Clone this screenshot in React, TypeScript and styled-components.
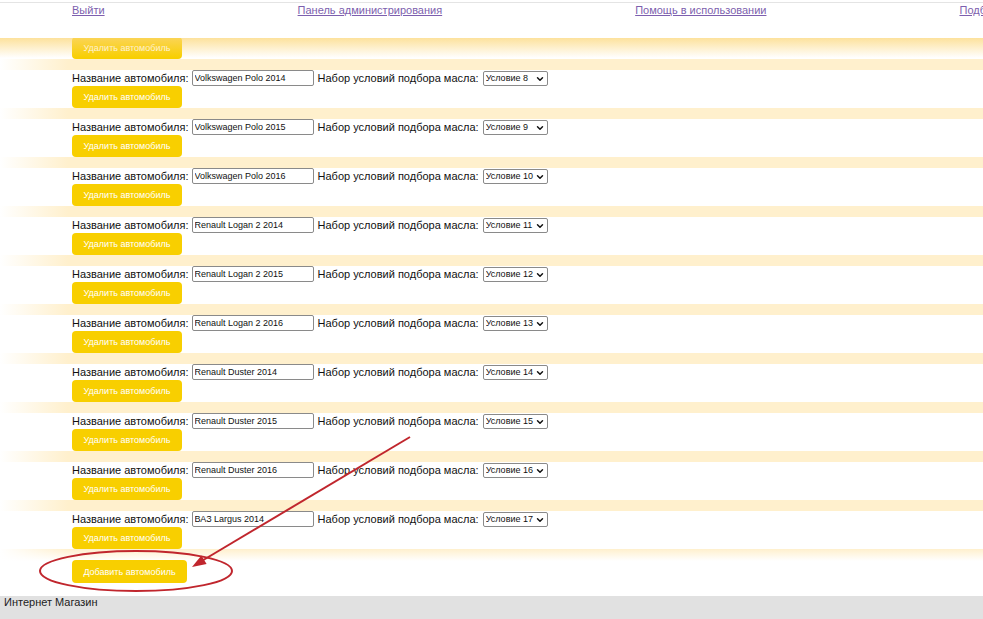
import React from 'react'
import styled, { createGlobalStyle } from 'styled-components'
import { ChevronDown } from 'lucide-react'

const cars = [
  { name: 'Volkswagen Polo 2013', cond: 7 },
  { name: 'Volkswagen Polo 2014', cond: 8 },
  { name: 'Volkswagen Polo 2015', cond: 9 },
  { name: 'Volkswagen Polo 2016', cond: 10 },
  { name: 'Renault Logan 2 2014', cond: 11 },
  { name: 'Renault Logan 2 2015', cond: 12 },
  { name: 'Renault Logan 2 2016', cond: 13 },
  { name: 'Renault Duster 2014', cond: 14 },
  { name: 'Renault Duster 2015', cond: 15 },
  { name: 'Renault Duster 2016', cond: 16 },
  { name: 'ВАЗ Largus 2014', cond: 17 },
]

const links = ['Выйти', 'Панель администрирования', 'Помощь в использовании', 'Подбор масла']

const App = () => {
  return (
    <Page>
      <GlobalStyle />
      <Header>
        {links.map((l) => (
          <NavLink key={l} href="#">{l}</NavLink>
        ))}
      </Header>
      <Main>
        <List>
          {cars.map((c) => (
            <Item key={c.name}>
              <Row>
                <Label>Название автомобиля:</Label>
                <NameInput defaultValue={c.name} />
                <Label>Набор условий подбора масла:</Label>
                <SelectBox>
                  <CondSelect defaultValue={String(c.cond)}>
                    <option value={String(c.cond)}>Условие {c.cond}</option>
                  </CondSelect>
                  <Chevron size={10} strokeWidth={3.5} />
                </SelectBox>
              </Row>
              <YellowButton>Удалить автомобиль</YellowButton>
            </Item>
          ))}
        </List>
        <AddArea>
          <YellowButton wide>Добавить автомобиль</YellowButton>
        </AddArea>
        <HeaderShade />
      </Main>
      <Footer>Интернет Магазин</Footer>
      <Annotation width="983" height="619" viewBox="0 0 983 619">
        <ellipse cx="136" cy="571" rx="96" ry="20" fill="none" stroke="#c0262d" strokeWidth="2" />
        <line x1="410" y1="437" x2="200" y2="562" stroke="#c0262d" strokeWidth="2" />
        <polygon points="192,567 201.4,555.5 206.6,564.1" fill="#c0262d" />
      </Annotation>
    </Page>
  )
}

export default App

const GlobalStyle = createGlobalStyle`
  html, body {
    margin: 0;
    padding: 0;
    overflow: hidden;
    background: #fff;
  }
  body {
    font-family: "Liberation Sans", Arial, sans-serif;
  }
`

const Page = styled.div`
  position: relative;
  display: flex;
  flex-direction: column;
  width: 983px;
  height: 619px;
  overflow: hidden;
`

const Header = styled.div`
  display: flex;
  gap: 193px;
  height: 36px;
  margin-top: 2px;
  padding: 1px 0 0 72px;
  box-sizing: border-box;
  border-top: 1px solid #e4e4e4;
  white-space: nowrap;
  flex-shrink: 0;
`

const NavLink = styled.a`
  font-size: 11px;
  line-height: 13px;
  color: #7d5fae;
  text-decoration: underline;
`

const Main = styled.div`
  position: relative;
  flex: 1;
  overflow: hidden;
`

const HeaderShade = styled.div`
  position: absolute;
  top: 0;
  left: 0;
  right: 0;
  height: 20px;
  background: linear-gradient(rgba(252, 214, 118, 0.72), rgba(255, 236, 180, 0));
`

const List = styled.div`
  display: flex;
  flex-direction: column;
  gap: 11px;
  margin-top: -17px;
  background: linear-gradient(90deg, #ffffff 0px, #fff0cd 68px);
`

const Item = styled.div`
  display: flex;
  flex-direction: column;
  align-items: flex-start;
  padding-left: 72px;
  background: #fff;
`

const Row = styled.div`
  display: flex;
  align-items: center;
  height: 16px;
`

const Label = styled.span`
  font-size: 11px;
  color: #111;
  margin-right: 3px;

  & + input {
    margin-right: 4px;
  }
`

const NameInput = styled.input`
  width: 122px;
  height: 16px;
  box-sizing: border-box;
  padding: 0 2px;
  margin: 0;
  border: 1px solid #8a8a8a;
  border-radius: 2px;
  font-family: "Liberation Sans", Arial, sans-serif;
  font-size: 9px;
  color: #111;
`

const SelectBox = styled.div`
  position: relative;
  margin-left: 1px;
  width: 65px;
  height: 15px;
`

const CondSelect = styled.select`
  appearance: none;
  -webkit-appearance: none;
  display: block;
  width: 65px;
  height: 15px;
  box-sizing: border-box;
  margin: 0;
  padding: 0 0 0 2px;
  border: 1px solid #8a8a8a;
  border-radius: 2px;
  font-family: "Liberation Sans", Arial, sans-serif;
  font-size: 9px;
  color: #111;
  background: #fff;
`

const Chevron = styled(ChevronDown)`
  position: absolute;
  right: 3px;
  top: 3px;
  color: #111;
  pointer-events: none;
`

const YellowButton = styled.button<{ wide?: boolean }>`
  width: ${(p) => (p.wide ? '115px' : '110px')};
  height: ${(p) => (p.wide ? '23px' : '22px')};
  margin: 0;
  padding: 0;
  border: none;
  border-radius: 4px;
  background: #f8cf00;
  color: #fff;
  font-family: "Liberation Sans", Arial, sans-serif;
  font-size: 9px;
`

const AddArea = styled.div`
  padding: 11px 0 13px 72px;
  background:
    linear-gradient(90deg, #ffffff 0px, rgba(255, 255, 255, 0) 68px),
    linear-gradient(#fff0cd 0px, #ffffff 12px);
`

const Footer = styled.div`
  height: 23px;
  flex-shrink: 0;
  padding-left: 4px;
  background: #e1e1e1;
  font-size: 11px;
  line-height: 13px;
  color: #222;
`

const Annotation = styled.svg`
  position: absolute;
  top: 0;
  left: 0;
  pointer-events: none;
`
